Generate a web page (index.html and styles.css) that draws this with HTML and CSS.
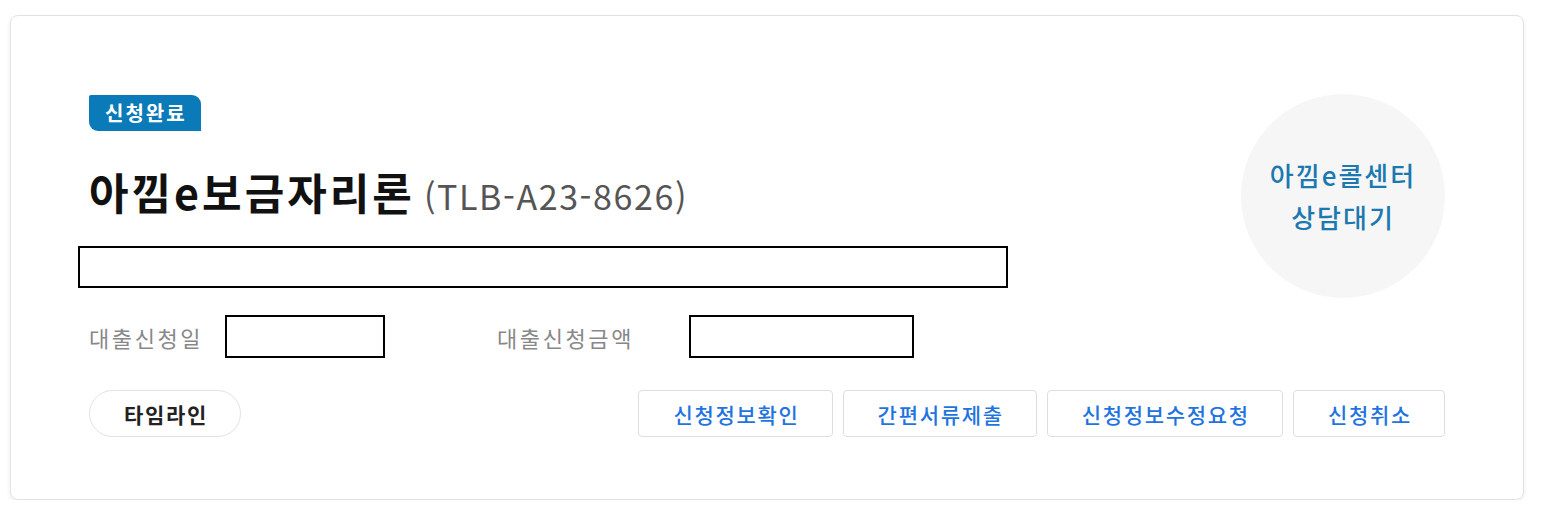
FILE: index.html
```html
<!DOCTYPE html>
<html lang="ko">
<head>
    <meta charset="UTF-8">
    <meta name="viewport" content="width=device-width, initial-scale=1.0">
    <title>대출신청 현황</title>
    <link rel="stylesheet" href="styles.css">
</head>
<body>
    <div class="loan-card">
        <div class="loan-top">
            <div class="loan-info">
                <span class="status-badge">신청완료</span>
                <h2 class="loan-title">아낌e보금자리론<span class="loan-code">(TLB-A23-8626)</span></h2>
                <div class="masked masked-wide"></div>
                <div class="loan-meta">
                    <span class="meta-label">대출신청일</span>
                    <div class="masked masked-date"></div>
                    <span class="meta-label">대출신청금액</span>
                    <div class="masked masked-amount"></div>
                </div>
            </div>
            <div class="call-status">
                <span>아낌e콜센터</span>
                <span>상담대기</span>
            </div>
        </div>

        <div class="loan-actions">
            <button class="btn-timeline">타임라인</button>
            <div class="action-group">
                <button class="btn-action">신청정보확인</button>
                <button class="btn-action">간편서류제출</button>
                <button class="btn-action">신청정보수정요청</button>
                <button class="btn-action">신청취소</button>
            </div>
        </div>
    </div>
</body>
</html>
```

FILE: styles.css
```css
* {
    margin: 0;
    padding: 0;
    box-sizing: border-box;
}

body {
    font-family: "Noto Sans CJK KR", "Noto Sans", sans-serif;
    background: #fff;
    color: #111;
    padding: 15px 34px 0 10px;
}

.loan-card {
    border: 1px solid #e2e2e2;
    border-radius: 8px;
    box-shadow: 0 2px 5px rgba(0, 0, 0, 0.08);
    padding: 79px 78px 62px 78px;
}

.loan-top {
    display: flex;
    justify-content: space-between;
    align-items: flex-start;
}

.status-badge {
    display: inline-block;
    height: 36px;
    line-height: 36px;
    padding: 0 14px 0 16px;
    background: #0b7ab9;
    color: #fff;
    font-size: 20px;
    font-weight: 700;
    letter-spacing: 2px;
    border-radius: 2px 9px 0 9px;
}

.loan-title {
    margin-top: 37px;
    font-size: 43px;
    font-weight: 700;
    line-height: 46px;
    letter-spacing: 3px;
}

.loan-code {
    margin-left: 9px;
    font-size: 34px;
    font-weight: 400;
    color: #555;
    letter-spacing: 1.6px;
}

.masked {
    border: 2px solid #000;
    background: #fff;
}

.masked-wide {
    width: 930px;
    height: 42px;
    margin: 27px 0 0 -11px;
}

.loan-meta {
    display: grid;
    grid-template-columns: 136px 272px 192px auto;
    align-items: center;
    margin-top: 27px;
}

.meta-label {
    font-size: 22px;
    color: #888;
    letter-spacing: 2.6px;
}

.masked-date {
    width: 160px;
    height: 43px;
}

.masked-amount {
    width: 225px;
    height: 43px;
}

.call-status {
    width: 204px;
    height: 204px;
    margin-top: -1px;
    border-radius: 50%;
    background: #f6f6f6;
    display: flex;
    flex-direction: column;
    align-items: center;
    justify-content: center;
    color: #1b78b0;
    font-size: 26px;
    font-weight: 500;
    line-height: 42px;
    letter-spacing: 2px;
}

.loan-actions {
    display: flex;
    justify-content: space-between;
    align-items: center;
    margin-top: 32px;
}

.loan-actions button {
    font-family: inherit;
    height: 47px;
    background: #fff;
    cursor: pointer;
    font-size: 21px;
    letter-spacing: 1.7px;
}

.btn-timeline {
    padding: 0 32px 0 34px;
    border: 1px solid #e2e2e2;
    border-radius: 24px;
    font-weight: 700;
    color: #222;
}

.action-group {
    display: flex;
    gap: 10px;
}

.btn-action {
    padding: 0 32px 0 34px;
    border: 1px solid #dedede;
    border-radius: 4px;
    font-weight: 500;
    color: #1f74e0;
}
```
